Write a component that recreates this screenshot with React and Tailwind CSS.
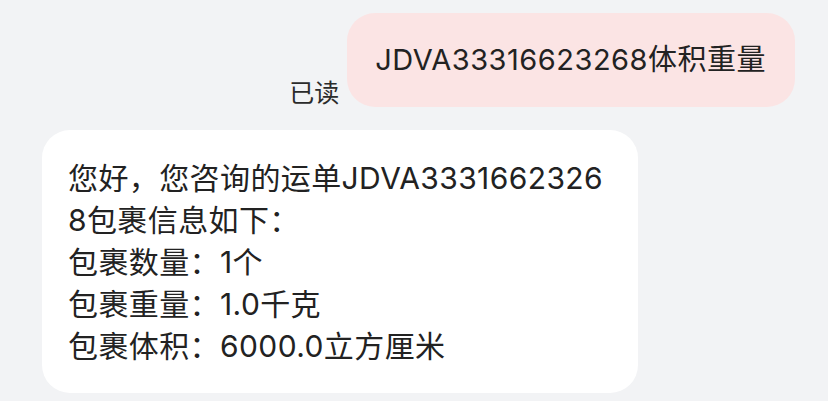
const font = { fontFamily: 'Inter, "Noto Sans CJK SC", sans-serif' };

const lines = [
  '您好，您咨询的运单JDVA3331662326',
  '8包裹信息如下：',
  '包裹数量：1个',
  '包裹重量：1.0千克',
  '包裹体积：6000.0立方厘米',
];

export default function App() {
  return (
    <main className="min-h-[401px] w-[828px] bg-[#f2f3f5] pt-[13px]" style={font}>
      <div className="flex items-end justify-end pr-[33px]">
        <span className="mr-[8px] mb-[-1px] text-[25px] leading-[30px] text-[#2b2b2b]">已读</span>
        <div className="flex h-[94px] items-center rounded-[28px] bg-[#fbe4e4] pl-[28px] pr-[29px] text-[29px] tracking-[0.5px] text-[#222]">
          JDVA33316623268体积重量
        </div>
      </div>

      <div className="ml-[42px] mt-[23px] w-[596px] rounded-[28px] bg-white pt-[27px] pb-[26px] pl-[26px]">
        {lines.map((line) => (
          <div key={line} className="whitespace-nowrap text-[30px] leading-[42px] tracking-[0.4px] text-[#222]">
            {line}
          </div>
        ))}
      </div>
    </main>
  );
}
